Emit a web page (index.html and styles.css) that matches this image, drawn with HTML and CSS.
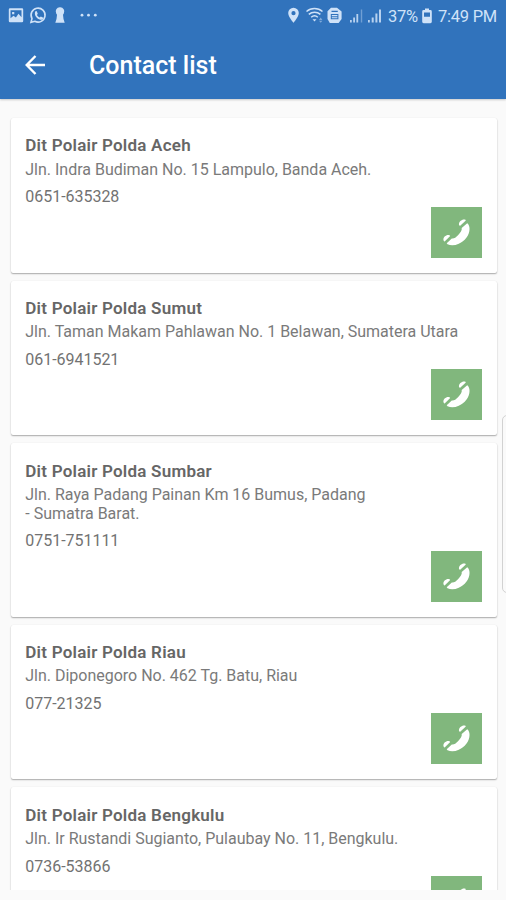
FILE: index.html
```html
<!DOCTYPE html>
<html lang="id">
<head>
<meta charset="utf-8">
<title>Contact list</title>
<link rel="stylesheet" href="styles.css">
</head>
<body>
<svg class="defs" width="0" height="0" aria-hidden="true">
  <symbol id="phone" viewBox="0 0 51 51">
    <path d="M36.800 16.500C40 20.500 38.700 27.800 33.700 32.800C28.800 37.600 21.700 39.700 16.500 37.300L15.700 36.200L20.800 31.500C22.800 32 24.900 30.300 27 28.200C29.400 25.800 31.200 23.300 30.700 21.100L35.900 16.400Z"/>
    <path d="M28.300 18.600C27.500 17.200 28.100 15.400 29.400 14.100C30.900 12.500 33.100 11.900 34.500 12.800L34.800 13.500L29.200 18.700ZM13.200 34.500C11.900 33 12.200 31 13.600 29.600C15.200 28 17.400 27.500 18.800 28.400L19.200 29.100L13.900 34.200Z"/>
  </symbol>
</svg>
<header class="appbar">
  <div class="status">
    <div class="status-left">
      <svg width="92" height="20" viewBox="0 0 92 20" fill="currentColor">
        <path fill-rule="evenodd" d="M3 2.300h12a1.200 1.200 0 0 1 1.200 1.200v11.500a1.200 1.200 0 0 1-1.200 1.200H3a1.200 1.200 0 0 1-1.200-1.200V3.500A1.200 1.200 0 0 1 3 2.300zM3.500 4.200v8l3-2.400 2.400 1.700 2.600-3.800 3 3.500V4.200zM5.100 6h2.200v2.200H5.100z"/>
        <path fill="none" stroke="currentColor" stroke-width="1.600" d="M24 16.300l1-3.700a7 7 0 1 1 2.800 2.700z"/>
        <path d="M28.100 5.600l1.500-.5 1.200 2.700-.9 1.100c.7 1.300 1.500 2 2.800 2.600l1.100-1 2.500 1.300c-.2 1.700-1.400 2.300-3 2-3.400-.8-6.300-4.100-5.200-8.200z"/>
        <path d="M53 1.300a4.100 4.100 0 0 1 3.800 6.100l-.8 1.300.5 4.300 1.200 3.700h-9.400l1.200-3.700.5-4.300-.8-1.300A4.100 4.100 0 0 1 53 1.300z"/>
        <circle cx="75" cy="9.200" r="1.400"/><circle cx="81.500" cy="9.200" r="1.400"/><circle cx="88.300" cy="9.200" r="1.400"/>
      </svg>
    </div>
    <div class="status-right">
      <svg width="98" height="20" viewBox="0 0 98 20" fill="currentColor">
        <path fill-rule="evenodd" d="M6.500 1.800a5.300 5.300 0 0 1 5.300 5.300c0 3.900-5.300 9.800-5.300 9.800S1.200 11 1.200 7.100a5.300 5.300 0 0 1 5.300-5.300zm0 3.300a2.100 2.100 0 1 0 0 4.200 2.100 2.100 0 0 0 0-4.200z"/>
        <g fill="none" stroke="currentColor" stroke-width="1.500"><path d="M19.500 5.500c4.500-4 11.500-4 16 0M21.800 8.400c3.400-3 8.200-3 11.600 0M24.200 11.200c2-1.700 4.600-1.700 6.600 0"/></g>
        <path d="M25.500 13.200h4l-2 2.400z"/>
        <path opacity=".5" d="M32 14l1.700-2.500 1.700 2.500zM32 14.800h3.400l-1.700 2z"/>
        <path fill-rule="evenodd" d="M44 1.800h6l4.600 3.700V13l-3 4h-8.800l-2.300-4V5.200zM44.500 4.800v1.200h6.300V4.800zM43.800 8v5.200h7.600V8zM44.800 9h5.600v1.200h-5.600zM44.800 11.200h5.600v1h-5.600z"/>
        <path opacity=".85" d="M63 14h1.800v2.500H63zM66.200 11.500H68v5h-1.800zM69.400 8h1.800v8.500h-1.800zM81 14h1.800v2.500H81zM84.700 11.500h2v5h-2zM88.400 7.500h2v9h-2zM92 3.500h2v13h-2z"/>
        <path opacity=".4" d="M73.800 3.500h1.400v13h-1.400z"/>
      </svg>
      <span class="battery-text">37%</span>
      <svg class="battery" width="12" height="18" viewBox="0 0 12 18" fill="currentColor"><path fill-rule="evenodd" d="M4 1.500h4v1.600h1.400q1.400 0 1.400 1.400v10.300q0 1.400-1.400 1.400H2.600q-1.400 0-1.400-1.400V4.500q0-1.400 1.400-1.400H4zM3 5.500v4.300h6V5.500z"/></svg>
      <span class="clock">7:49 PM</span>
    </div>
  </div>
  <div class="toolbar">
    <svg class="back" width="22" height="22" viewBox="0 0 22 22" fill="none" stroke="currentColor" stroke-width="2.400"><path d="M10.500 1L1.700 10L10.500 19M2 10H20"/></svg>
    <h1>Contact list</h1>
  </div>
</header>
<main class="list">
  <article class="card">
    <h2>Dit Polair Polda Aceh</h2>
    <p class="address">Jln. Indra Budiman No. 15 Lampulo, Banda Aceh.</p>
    <p class="number">0651-635328</p>
    <button class="call" aria-label="Call"><svg><use href="#phone"/></svg></button>
  </article>
  <article class="card">
    <h2>Dit Polair Polda Sumut</h2>
    <p class="address">Jln. Taman Makam Pahlawan No. 1 Belawan, Sumatera Utara</p>
    <p class="number">061-6941521</p>
    <button class="call" aria-label="Call"><svg><use href="#phone"/></svg></button>
  </article>
  <article class="card">
    <h2>Dit Polair Polda Sumbar</h2>
    <p class="address">Jln. Raya Padang Painan Km 16 Bumus, Padang<br>- Sumatra Barat.</p>
    <p class="number">0751-751111</p>
    <button class="call" aria-label="Call"><svg><use href="#phone"/></svg></button>
  </article>
  <article class="card">
    <h2>Dit Polair Polda Riau</h2>
    <p class="address">Jln. Diponegoro No. 462 Tg. Batu, Riau</p>
    <p class="number">077-21325</p>
    <button class="call" aria-label="Call"><svg><use href="#phone"/></svg></button>
  </article>
  <article class="card">
    <h2>Dit Polair Polda Bengkulu</h2>
    <p class="address">Jln. Ir Rustandi Sugianto, Pulaubay No. 11, Bengkulu.</p>
    <p class="number">0736-53866</p>
    <button class="call" aria-label="Call"><svg><use href="#phone"/></svg></button>
  </article>
</main>
<div class="edge-handle"></div>
</body>
</html>
```
FILE: styles.css
```css
* { box-sizing: border-box; }
body {
  margin: 0;
  height: 900px;
  display: flex;
  flex-direction: column;
  overflow: hidden;
  background: #fafafa;
  font-family: Roboto, "Liberation Sans", sans-serif;
  color: #7a7a7a;
}
h1, h2, p { margin: 0; }
.defs { position: absolute; }
.appbar {
  flex: none;
  height: 99px;
  background: #3173bc;
  color: #fff;
  box-shadow: 0 1px 2px rgba(0, 0, 0, .2);
}
.status {
  height: 32px;
  padding: 6px 9px 0 7px;
  display: flex;
  justify-content: space-between;
  color: #cfe2f8;
}
.status svg { display: block; flex: none; }
.status-right {
  display: flex;
  font-size: 16.5px;
  line-height: 21px;
  letter-spacing: -.25px;
  white-space: nowrap;
}
.battery-text { margin-left: 3px; width: 30px; }
.battery { margin: 1px 5px 0 3px; }
.clock { width: 59px; }
.toolbar {
  height: 67px;
  padding-left: 25px;
  display: flex;
  align-items: center;
}
.back { margin-right: 42px; }
h1 {
  font-size: 25px;
  font-weight: 500;
  line-height: 30px;
}
.list {
  flex: none;
  height: 791px;
  padding: 19px 9px 0 11px;
  display: flex;
  flex-direction: column;
  gap: 8px;
  overflow: hidden;
}
.card {
  flex: none;
  padding: 17.4px 15px 15px 14.3px;
  display: flex;
  flex-direction: column;
  background: #fff;
  border-radius: 2px;
  box-shadow: 0 1px 1.5px rgba(0, 0, 0, .32), 0 0 1px rgba(0, 0, 0, .08);
}
h2 {
  margin-bottom: 5.3px;
  font-size: 17px;
  font-weight: 600;
  line-height: 20px;
  letter-spacing: .23px;
  color: #666;
}
.address {
  font-size: 16px;
  line-height: 18.4px;
  letter-spacing: -.01px;
  white-space: nowrap;
}
.number {
  margin-top: 8.3px;
  font-size: 16px;
  line-height: 20px;
  letter-spacing: -.03px;
  color: #727272;
}
.call {
  align-self: flex-end;
  width: 51px;
  height: 51px;
  margin-top: -.7px;
  padding: 0;
  border: 0;
  background: #81b77d;
  color: #fff;
}
.call svg { display: block; width: 51px; height: 51px; fill: currentColor; }
.edge-handle {
  position: absolute;
  top: 415px;
  right: -8px;
  width: 12px;
  height: 178px;
  border: 1px solid #d2d2d2;
  border-radius: 5px;
  background: #fafafa;
}
```
